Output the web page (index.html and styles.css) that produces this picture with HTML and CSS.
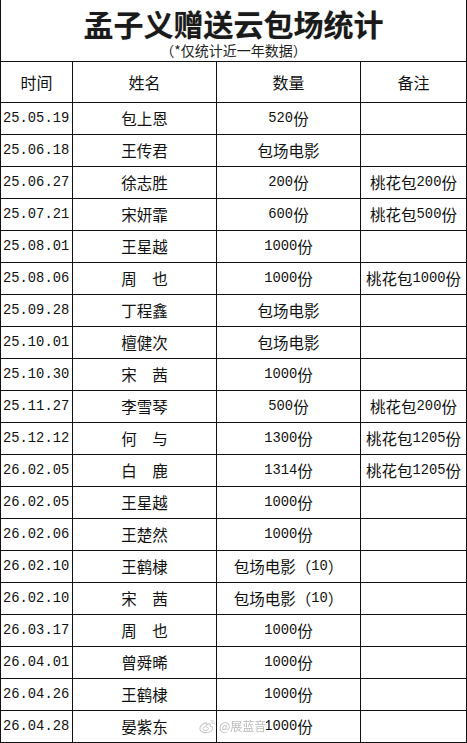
FILE: index.html
```html
<!DOCTYPE html>
<html lang="zh">
<head>
<meta charset="utf-8">
<title>孟子义赠送云包场统计</title>
<link rel="stylesheet" href="styles.css">
</head>
<body>
<div class="sheet">
  <div class="title-block">
    <div class="title">孟子义赠送云包场统计</div>
    <div class="subtitle">（*仅统计近一年数据）</div>
  </div>
  <div class="grid">
    <div class="cell head">时间</div>
    <div class="cell head">姓名</div>
    <div class="cell head">数量</div>
    <div class="cell head">备注</div>

    <div class="cell date">25.05.19</div><div class="cell">包上恩</div><div class="cell"><span class="n">520</span>份</div><div class="cell"></div>
    <div class="cell date">25.06.18</div><div class="cell">王传君</div><div class="cell">包场电影</div><div class="cell"></div>
    <div class="cell date">25.06.27</div><div class="cell">徐志胜</div><div class="cell"><span class="n">200</span>份</div><div class="cell">桃花包<span class="n">200</span>份</div>
    <div class="cell date">25.07.21</div><div class="cell">宋妍霏</div><div class="cell"><span class="n">600</span>份</div><div class="cell">桃花包<span class="n">500</span>份</div>
    <div class="cell date">25.08.01</div><div class="cell">王星越</div><div class="cell"><span class="n">1000</span>份</div><div class="cell"></div>
    <div class="cell date">25.08.06</div><div class="cell">周　也</div><div class="cell"><span class="n">1000</span>份</div><div class="cell">桃花包<span class="n">1000</span>份</div>
    <div class="cell date">25.09.28</div><div class="cell">丁程鑫</div><div class="cell">包场电影</div><div class="cell"></div>
    <div class="cell date">25.10.01</div><div class="cell">檀健次</div><div class="cell">包场电影</div><div class="cell"></div>
    <div class="cell date">25.10.30</div><div class="cell">宋　茜</div><div class="cell"><span class="n">1000</span>份</div><div class="cell"></div>
    <div class="cell date">25.11.27</div><div class="cell">李雪琴</div><div class="cell"><span class="n">500</span>份</div><div class="cell">桃花包<span class="n">200</span>份</div>
    <div class="cell date">25.12.12</div><div class="cell">何　与</div><div class="cell"><span class="n">1300</span>份</div><div class="cell">桃花包<span class="n">1205</span>份</div>
    <div class="cell date">26.02.05</div><div class="cell">白　鹿</div><div class="cell"><span class="n">1314</span>份</div><div class="cell">桃花包<span class="n">1205</span>份</div>
    <div class="cell date">26.02.05</div><div class="cell">王星越</div><div class="cell"><span class="n">1000</span>份</div><div class="cell"></div>
    <div class="cell date">26.02.06</div><div class="cell">王楚然</div><div class="cell"><span class="n">1000</span>份</div><div class="cell"></div>
    <div class="cell date">26.02.10</div><div class="cell">王鹤棣</div><div class="cell">包场电影（<span class="n">10</span>）</div><div class="cell"></div>
    <div class="cell date">26.02.10</div><div class="cell">宋　茜</div><div class="cell">包场电影（<span class="n">10</span>）</div><div class="cell"></div>
    <div class="cell date">26.03.17</div><div class="cell">周　也</div><div class="cell"><span class="n">1000</span>份</div><div class="cell"></div>
    <div class="cell date">26.04.01</div><div class="cell">曾舜晞</div><div class="cell"><span class="n">1000</span>份</div><div class="cell"></div>
    <div class="cell date">26.04.26</div><div class="cell">王鹤棣</div><div class="cell"><span class="n">1000</span>份</div><div class="cell"></div>
    <div class="cell date">26.04.28</div><div class="cell">晏紫东</div><div class="cell wm-host"><span class="watermark"><svg class="wb" viewBox="0 0 20 18" width="18" height="16"><path d="M8.5 5.5c-4 1-7 4-6.5 7 .5 3 4.5 4.5 8.5 3.8 4-.7 6.5-3.3 5.8-5.6-.4-1.3-1.8-1.6-2.6-1.3.6-1.6.2-2.8-1.6-2.6-1 .1-2.2.6-2.8 1 .5-1.3.6-2.7-.8-2.3z" fill="none" stroke="#c8c8c8" stroke-width="1.2"/><ellipse cx="8.5" cy="12" rx="3" ry="2.2" fill="none" stroke="#c8c8c8" stroke-width="1"/><path d="M14 2.5a4 4 0 0 1 4 4.2M14 4.5a2 2 0 0 1 2 2" fill="none" stroke="#c8c8c8" stroke-width="1.1"/></svg><span class="wm-text">@展蓝音</span></span><span class="n">1000</span>份</div><div class="cell"></div>
  </div>
</div>
</body>
</html>
```
FILE: styles.css
```css
html, body {
  margin: 0;
  padding: 0;
  background: #fff;
}
body {
  width: 467px;
  height: 743px;
  overflow: hidden;
  font-family: "Noto Sans CJK SC", "Noto Sans", sans-serif;
  color: #111;
}
.sheet {
  width: 467px;
  box-sizing: border-box;
  border-left: 1px solid #111;
  border-right: 1px solid #111;
}
.title-block {
  height: 62px;
  box-sizing: border-box;
  border-bottom: 1px solid #111;
  display: flex;
  flex-direction: column;
  align-items: center;
}
.title {
  margin-top: 8px;
  font-size: 30px;
  line-height: 30px;
  font-weight: 700;
  color: #1a1a1a;
  text-shadow: 0 0 1px rgba(0,0,0,0.3);
}
.subtitle {
  margin-top: 5px;
  font-size: 14px;
  line-height: 15px;
  color: #222;
}
.grid {
  display: grid;
  grid-template-columns: 72px 144px 144px 105px;
  grid-template-rows: 41px;
  grid-auto-rows: 32px;
}
.cell {
  box-sizing: border-box;
  border-right: 1px solid #111;
  border-bottom: 1px solid #111;
  display: flex;
  align-items: center;
  justify-content: center;
  font-size: 15.5px;
  line-height: 1;
  white-space: nowrap;
  color: #111;
}
.cell:nth-child(4n) {
  border-right: none;
}
.head {
  font-size: 16px;
}
.date {
  justify-content: flex-start;
  padding-left: 2px;
  font-family: "Liberation Mono", monospace;
  font-size: 13.8px;
}
.n {
  font-family: "Liberation Mono", monospace;
  font-size: 13.8px;
}
.wm-host {
  position: relative;
}
.watermark {
  position: absolute;
  left: -19px;
  top: 7px;
  display: flex;
  align-items: center;
  gap: 3px;
}
.wb {
  display: block;
}
.wm-text {
  font-size: 12px;
  color: #bdbdbd;
  filter: blur(0.6px);
  background: rgba(255,255,255,0.8);
}
```
